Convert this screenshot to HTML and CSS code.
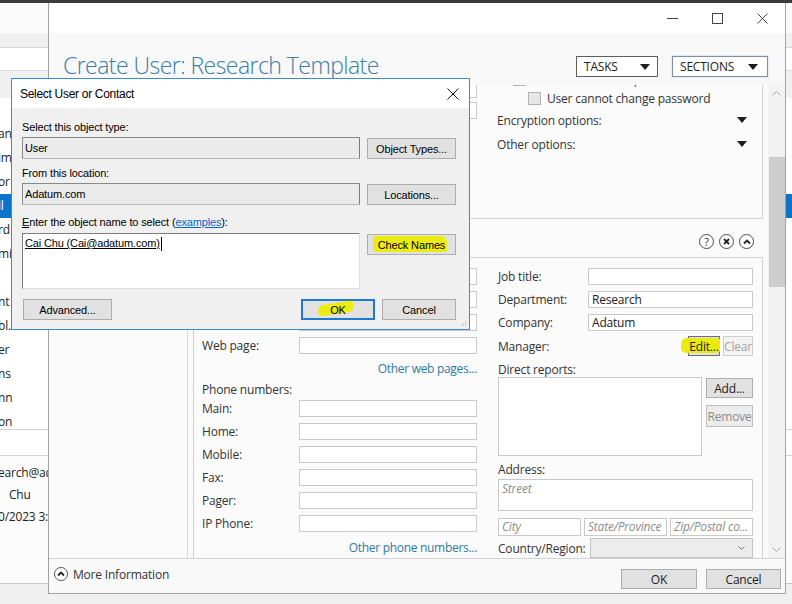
FILE: index.html
```html
<!DOCTYPE html>
<html lang="en">
<head>
<meta charset="utf-8">
<title>Create User: Research Template</title>
<link rel="stylesheet" href="styles.css">
</head>
<body>
<div class="topbar"></div>
<div class="desktop">
  <div class="bgwin">
    <div class="bg-toolbar"></div>
    <div class="bg-colhead"></div>
    <div class="bg-row"></div>
    <div class="bg-gray"></div>
    <div class="bg-list">
      <div class="bg-item"></div>
      <div class="bg-item">an</div>
      <div class="bg-item">im</div>
      <div class="bg-item">or</div>
      <div class="bg-item sel">il</div>
      <div class="bg-item">rd</div>
      <div class="bg-item">mi</div>
      <div class="bg-item"></div>
      <div class="bg-item">nt</div>
      <div class="bg-item">bl…</div>
      <div class="bg-item">er</div>
      <div class="bg-item">ns</div>
      <div class="bg-item">nn</div>
      <div class="bg-item">on</div>
    </div>
    <div class="bg-sep"></div>
    <div class="bg-detail">
      <div class="bg-line">earch@adatum.com</div>
      <div class="bg-line ind">Chu</div>
      <div class="bg-line">0/2023 3:12 PM</div>
    </div>
    <div class="bg-rest"></div>
  </div>

  <div class="win">
    <div class="titlebar">
      <span class="cap"><svg width="11" height="11" viewBox="0 0 11 11"><path d="M0 5.5h11" stroke="#444" stroke-width="1"/></svg></span>
      <span class="cap"><svg width="11" height="11" viewBox="0 0 11 11"><rect x="0.5" y="0.5" width="10" height="10" fill="none" stroke="#444"/></svg></span>
      <span class="cap"><svg width="11" height="11" viewBox="0 0 11 11"><path d="M0.5 0.5l10 10M10.5 0.5l-10 10" stroke="#444"/></svg></span>
    </div>
    <div class="header">
      <h1 class="title">Create User: Research Template</h1>
      <div class="hbtns">
        <div class="drop tasks">TASKS<span class="tri"></span></div>
        <div class="drop sections">SECTIONS<span class="tri"></span></div>
      </div>
    </div>
    <div class="content">
      <div class="nav"></div>
      <div class="pane">
        <div class="panel acct">
          <div class="acct-left">
            <div class="frow"><span class="lbl">Password:</span><span class="inp"></span></div>
            <div class="frow"><span class="lbl">Confirm password:</span><span class="inp"></span></div>
          </div>
          <div class="acct-right">
            <div class="chk c1"><span class="box"></span>Password never expires</div>
            <div class="chk c2"><span class="box"></span>User cannot change password</div>
            <div class="opt">Encryption options:<span class="tri"></span></div>
            <div class="opt">Other options:<span class="tri"></span></div>
          </div>
        </div>
        <div class="sec-head">
          <span class="sec-title">Organization</span>
          <div class="sec-icons">
            <span class="ico">?</span>
            <span class="ico"><svg width="7" height="7" viewBox="0 0 7 7"><path d="M1 1l5 5M6 1l-5 5" stroke="#222" stroke-width="1.8"/></svg></span>
            <span class="ico"><svg width="8" height="6" viewBox="0 0 8 6"><path d="M1 4.5l3-3 3 3" fill="none" stroke="#222" stroke-width="1.8"/></svg></span>
          </div>
        </div>
        <div class="panel org">
          <div class="col c-left">
            <div class="frow"><span class="lbl">Display name:</span><span class="inp"></span></div>
            <div class="frow"><span class="lbl">Office:</span><span class="inp"></span></div>
            <div class="frow"><span class="lbl">E-mail:</span><span class="inp"></span></div>
            <div class="frow"><span class="lbl">Web page:</span><span class="inp"></span></div>
            <div class="link">Other web pages...</div>
            <div class="sub">Phone numbers:</div>
            <div class="frow first"><span class="lbl">Main:</span><span class="inp"></span></div>
            <div class="frow"><span class="lbl">Home:</span><span class="inp"></span></div>
            <div class="frow"><span class="lbl">Mobile:</span><span class="inp"></span></div>
            <div class="frow"><span class="lbl">Fax:</span><span class="inp"></span></div>
            <div class="frow"><span class="lbl">Pager:</span><span class="inp"></span></div>
            <div class="frow"><span class="lbl">IP Phone:</span><span class="inp"></span></div>
            <div class="link last">Other phone numbers...</div>
          </div>
          <div class="col c-right">
            <div class="frow"><span class="lbl">Job title:</span><span class="inp"></span></div>
            <div class="frow"><span class="lbl">Department:</span><span class="inp">Research</span></div>
            <div class="frow"><span class="lbl">Company:</span><span class="inp">Adatum</span></div>
            <div class="mgr">
              <span class="lbl">Manager:</span>
              <span class="mbtn edit">Edit...</span>
              <span class="mbtn clear">Clear</span>
            </div>
            <div class="sub dr">Direct reports:</div>
            <div class="reports">
              <div class="listbox"></div>
              <div class="rbtns">
                <span class="mbtn add">Add...</span>
                <span class="mbtn remove">Remove</span>
              </div>
            </div>
            <div class="sub addr">Address:</div>
            <div class="street ph">Street</div>
            <div class="cityrow">
              <span class="cell ph">City</span>
              <span class="cell ph">State/Province</span>
              <span class="cell ph">Zip/Postal co...</span>
            </div>
            <div class="country">
              <span class="lbl">Country/Region:</span>
              <span class="select"><svg width="7" height="4" viewBox="0 0 7 4"><path d="M0.5 0.5l3 3 3-3" fill="none" stroke="#777"/></svg></span>
            </div>
          </div>
        </div>
      </div>
      <div class="sbar">
        <span class="sb-btn"><svg width="9" height="5" viewBox="0 0 9 5"><path d="M0.5 4.5l4-4 4 4" fill="none" stroke="#a6a6a6"/></svg></span>
        <div class="sb-track"><span class="thumb"></span></div>
        <span class="sb-btn"><svg width="9" height="5" viewBox="0 0 9 5"><path d="M0.5 0.5l4 4 4-4" fill="none" stroke="#a6a6a6"/></svg></span>
      </div>
    </div>
    <div class="footer">
      <div class="more">
        <span class="more-ico"><svg width="8" height="6" viewBox="0 0 8 6"><path d="M1 4.5l3-3 3 3" fill="none" stroke="#222" stroke-width="1.8"/></svg></span>
        More Information
      </div>
      <div class="fbtns">
        <span class="fbtn">OK</span>
        <span class="fbtn">Cancel</span>
      </div>
    </div>
  </div>

  <div class="dialog">
    <div class="dlg-title">
      <span>Select User or Contact</span>
      <svg width="12" height="12" viewBox="0 0 12 12"><path d="M0.5 0.5l11 11M11.5 0.5l-11 11" stroke="#111" stroke-width="1"/></svg>
    </div>
    <div class="dlg-body">
      <div class="dlbl">Select this object type:</div>
      <div class="drow"><div class="dfield">User</div><span class="dbtn">Object Types...</span></div>
      <div class="dlbl l2">From this location:</div>
      <div class="drow"><div class="dfield">Adatum.com</div><span class="dbtn">Locations...</span></div>
      <div class="dlbl l3"><u>E</u>nter the object name to select (<a class="dlink">examples</a>):</div>
      <div class="drow tall">
        <div class="darea"><u>Cai Chu (Cai@adatum.com)</u><span class="caret"></span></div>
        <span class="dbtn hl-check">Check Names</span>
      </div>
      <div class="dfoot">
        <span class="dbtn adv">Advanced...</span>
        <span class="spacer"></span>
        <span class="dbtn ok">OK</span>
        <span class="dbtn cancel">Cancel</span>
      </div>
    </div>
    <svg class="grip" width="6" height="6" viewBox="0 0 6 6"><g fill="#b4b4b4"><rect x="4" y="0" width="1" height="1"/><rect x="2" y="2" width="1" height="1"/><rect x="4" y="2" width="1" height="1"/><rect x="0" y="4" width="1" height="1"/><rect x="2" y="4" width="1" height="1"/><rect x="4" y="4" width="1" height="1"/></g></svg>
  </div>
</div>
</body>
</html>
```
FILE: styles.css
```css
*{box-sizing:border-box;margin:0;padding:0}
html,body{width:792px;height:604px;overflow:hidden}
body{background:#f0f0f0;font-family:"Open Sans","Noto Sans",sans-serif;font-size:12px;letter-spacing:-0.2px;color:#333;display:flex;flex-direction:column}
.topbar{height:3px;background:#3b3b3b;flex:none}
.desktop{position:relative;flex:1;overflow:hidden}

/* background window */
.bgwin{height:601px;background:#fff;display:flex;flex-direction:column}
.bg-toolbar{height:30px;background:#fbfbfb;flex:none}
.bg-colhead{height:15px;background:#f0f0f0;border-bottom:1px solid #d6d6d6;flex:none}
.bg-row{height:23px;border-bottom:1px solid #dcdcdc;flex:none}
.bg-gray{height:27px;background:#f0f0f0;flex:none}
.bg-list{height:332px;border-bottom:1px solid #d3d3d3;overflow:hidden;flex:none}
.bg-item{height:24px;line-height:24px;white-space:nowrap;color:#222;text-indent:-2px}
.bg-item.sel{background:#0a74cc;color:#fff}
.bg-sep{height:26px;border-bottom:1px solid #d3d3d3;flex:none}
.bg-detail{height:128px;border-bottom:1px solid #c8c8c8;padding-top:6px;flex:none;background:#fcfcfc}
.bg-line{height:22px;line-height:22px;white-space:nowrap;color:#222;text-indent:-2px}
.bg-line.ind{padding-left:11px}
.bg-rest{flex:1;background:#f0f0f0}

/* main window */
.win{position:absolute;left:48px;top:0;width:738px;height:591px;background:#fff;border:1px solid #a3a3a3;border-top:none;display:flex;flex-direction:column}
.titlebar{height:30px;flex:none;display:flex;justify-content:flex-end;background:#fff}
.cap{width:45px;height:30px;display:flex;align-items:center;justify-content:center}
.header{height:52px;flex:none;background:#f8f8f8;display:flex;justify-content:space-between;align-items:flex-start;padding:0 17px 0 14px}
.title{font-weight:300;font-size:23px;line-height:32px;margin-top:16px;color:#3a7ea2;letter-spacing:-0.55px;white-space:nowrap}
.hbtns{display:flex;gap:14px;margin-top:23px}
.drop{height:21px;border:1px solid #5e5e5e;background:#fff;display:flex;align-items:center;justify-content:space-between;padding:0 7px 0 7px;color:#222;font-size:12px;letter-spacing:-0.2px}
.drop.tasks{width:82px}
.drop.sections{width:96px;border-color:#7f8ea6;box-shadow:0 0 0 1px #e4ecf6;padding-right:9px}
.tri{width:0;height:0;border-left:5px solid transparent;border-right:5px solid transparent;border-top:6px solid #1e1e1e}

.content{height:473px;flex:none;display:flex;background:#fafafa}
.nav{width:139px;flex:none;background:#fafafa;border-right:1px solid #d9d9d9}
.pane{width:570px;flex:none;margin-left:5px;overflow:hidden;display:flex;flex-direction:column}
.panel{border:1px solid #d3d3d3;background:#fbfbfb;flex:none}
.acct{height:134px;border-top:none;display:flex;overflow:hidden}
.acct-left{width:303px;flex:none;padding:0 20px 0 8px;display:flex;flex-direction:column;gap:4px;margin-top:-4px}
.acct-left .frow{margin-bottom:0}
.acct-right{flex:1;display:flex;flex-direction:column;padding-right:15px}
.chk{display:flex;align-items:center;height:13px;gap:6px;white-space:nowrap;color:#333}
.box{width:13px;height:13px;flex:none;border:1px solid #b3b3b3;background:#e6e6e6}
.chk.c1{margin-left:16px;margin-top:-12px}
.chk.c2{margin-left:31px;margin-top:6px}
.opt{height:18px;display:flex;align-items:center;justify-content:space-between;margin-top:6px;color:#333}

.sec-head{height:38px;flex:none;display:flex;justify-content:space-between;align-items:flex-start;padding:15px 9px 0 8px}
.sec-title{font-size:14px;color:#333}
.sec-icons{display:flex;gap:5px}
.ico{width:15px;height:15px;border:1px solid #4a4a4a;border-radius:50%;display:flex;align-items:center;justify-content:center;font-size:10px;line-height:1;color:#222;background:#fff}

.org{height:301px;border-bottom:none;overflow:hidden;display:flex;gap:21px;padding:10px 9px 0 8px}
.col{display:flex;flex-direction:column;flex:none}
.c-left{width:275px}
.c-right{width:255px}
.frow{display:flex;align-items:center;height:17px;margin-bottom:6px;flex:none}
.lbl{width:97px;flex:none;white-space:nowrap;color:#333}
.c-right .lbl{width:90px}
.inp{flex:1;height:17px;border:1px solid #c9c9c9;background:#fff;padding-left:3px;line-height:15px;color:#222}
.link{height:18px;line-height:18px;text-align:right;color:#2f7aa2;font-size:12px;letter-spacing:-0.3px;white-space:nowrap;flex:none}
.link.last{margin-top:1px}
.sub{height:16px;line-height:16px;margin-top:4px;color:#333;flex:none}
.frow.first{margin-top:2px}
.mgr{height:20px;margin-top:-1px;display:flex;align-items:center;gap:3px;flex:none}
.mgr .lbl{flex:1}
.mbtn{height:20px;display:flex;align-items:center;justify-content:center;background:#e1e1e1;border:1px solid #adadad;color:#222;position:relative;isolation:isolate;flex:none}
.mbtn.edit{width:32px;border-color:#6d6d6d}
.mbtn.edit::before{content:"";position:absolute;left:-8px;top:1px;width:39px;height:15px;background:#eaea12;border-radius:6px 2px 3px 5px;z-index:-1}
.mbtn.clear{width:30px;background:#f3f3f3;border-color:#cfcfcf;color:#a3a3a3}
.sub.dr{margin-top:6px;height:15px;line-height:15px}
.reports{height:79px;display:flex;gap:4px;flex:none}
.listbox{width:204px;height:79px;border:1px solid #c9c9c9;background:#fff;flex:none}
.rbtns{width:47px;display:flex;flex-direction:column}
.mbtn.add{width:47px;margin-top:1px}
.mbtn.remove{width:47px;height:22px;margin-top:7px;background:#ececec;border-color:#bdbdbd;color:#8a8a8a}
.sub.addr{margin-top:6px}
.ph{font-style:italic;color:#8c8c8c}
.street{height:32px;margin-top:1px;border:1px solid #c9c9c9;background:#fff;padding:1px 3px;line-height:15px;flex:none}
.cityrow{height:18px;margin-top:7px;display:flex;gap:3px;flex:none}
.cell{flex:1;border:1px solid #c9c9c9;background:#fff;padding-left:3px;line-height:16px;white-space:nowrap;overflow:hidden}
.country{height:20px;margin-top:2px;display:flex;align-items:center;flex:none}
.country .lbl{width:92px}
.select{flex:1;height:20px;border:1px solid #c3c3c3;background:#ececec;display:flex;align-items:center;justify-content:flex-end;padding-right:7px}

.sbar{width:17px;flex:none;margin-left:5px;display:flex;flex-direction:column;background:#f2f2f2}
.sb-btn{height:17px;flex:none;display:flex;align-items:center;justify-content:center}
.sb-track{flex:1;display:flex;flex-direction:column}
.thumb{height:130px;margin-top:55px;margin-left:1px;background:#cdcdcd}

.footer{height:35px;flex:none;border-top:1px solid #d3d3d3;background:#f9f9f9;display:flex;justify-content:space-between;padding:0 4px 0 5px}
.more{display:flex;align-items:center;gap:5px;height:14px;margin-top:8px;color:#333;font-size:12px}
.more-ico{width:14px;height:14px;border:1px solid #555;border-radius:50%;display:flex;align-items:center;justify-content:center;background:#fff}
.fbtns{display:flex;gap:9px;margin-top:10px}
.fbtn{width:76px;height:20px;display:flex;align-items:center;justify-content:center;background:#e1e1e1;border:1px solid #adadad;color:#222}
.fbtn + .fbtn{width:75px}

/* dialog */
.dialog{position:absolute;left:11px;top:75px;width:459px;height:252px;background:#f0f0f0;border:1px solid #3a8ad3;font-family:"Liberation Sans",Arial,sans-serif;font-size:11px;letter-spacing:-0.15px;color:#000;display:flex;flex-direction:column}
.dlg-title{height:29px;flex:none;background:#fff;display:flex;align-items:center;justify-content:space-between;padding:0 10px 0 8px;font-size:12px;letter-spacing:-0.3px}
.dlg-body{flex:1;padding:12px 13px 8px 10px;display:flex;flex-direction:column}
.dlbl{height:14px;line-height:14px;white-space:nowrap;flex:none}
.dlbl.l2{margin-top:7px}
.dlbl.l3{margin-top:10px}
.dlink{color:#0066cc;text-decoration:underline}
.drow{height:22px;margin-top:3px;display:flex;gap:7px;flex:none}
.drow.tall{height:56px;margin-top:4px}
.dfield{flex:1;height:22px;border:1px solid #8a8a8a;border-bottom-color:#b9b9b9;border-right-color:#7c7c7c;background:#ebebeb;padding-left:2px;line-height:20px}
.darea{flex:1;height:56px;background:#fff;border:1px solid #7e7e7e;border-right-color:#dedede;border-bottom-color:#dedede;padding:2px 2px;line-height:15px;display:flex;align-items:flex-start}
.caret{width:1px;height:14px;background:#000;margin-left:1px;margin-top:1px}
.dbtn{width:89px;height:21px;margin-top:1px;background:#e1e1e1;border:1px solid #adadad;display:flex;align-items:center;justify-content:center;position:relative;isolation:isolate;flex:none;white-space:nowrap}
.hl-check::before{content:"";position:absolute;left:5px;right:8px;top:1px;bottom:2px;background:#ecec12;border-radius:2px 6px 2px 3px;z-index:-1}
.dfoot{height:21px;margin-top:10px;display:flex;gap:7px;flex:none}
.dfoot .dbtn{margin-top:0}
.dbtn.adv{margin-left:1px}
.spacer{flex:1}
.dbtn.ok{width:74px;border:2px solid #1f78d1}
.dbtn.ok::before{content:"";position:absolute;left:15px;top:2px;width:36px;height:11px;background:#ecec12;border-radius:5px 3px 6px 4px;transform:rotate(-9deg);z-index:-1}
.dbtn.cancel{width:74px}
.grip{position:absolute;right:2px;bottom:2px}
```
